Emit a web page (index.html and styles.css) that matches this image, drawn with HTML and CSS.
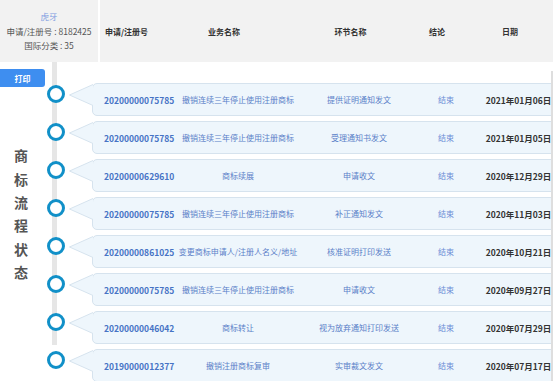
FILE: index.html
```html
<!DOCTYPE html>
<html>
    <head>
        <title>商标流程状态</title>
        <link rel="stylesheet" href="styles.css">
    </head>
<body>
    <div class="head">
        <div class="owner">
            <div class="owner-name">虎牙</div>
            <div>申请/注册号 : 8182425</div>
            <div>国际分类 : 35</div>
        </div>
        <div class="head-cols">
            <div class="hc-no">申请/注册号</div>
            <div class="hc-biz">业务名称</div>
            <div class="hc-step">环节名称</div>
            <div class="hc-res">结论</div>
            <div class="hc-date">日期</div>
        </div>
    </div>

    <div class="main">
        <div class="side">
            <button class="print-btn">打印</button>
            <div class="side-title">商标流程状态</div>
        </div>

        <div class="flow">
            <div class="row">
                <span class="node"></span>
                <svg class="tail" width="24" height="22" viewBox="0 0 24 22"><polyline points="24,0.5 0.5,11 24,21.5"></polyline></svg>
                <div class="card">
                    <div class="c-no">20200000075785</div>
                    <div class="c-biz">撤销连续三年停止使用注册商标</div>
                    <div class="c-step">提供证明通知发文</div>
                    <div class="c-res">结束</div>
                    <div class="c-date">2021年01月06日</div>
                </div>
            </div>
            <div class="row">
                <span class="node"></span>
                <svg class="tail" width="24" height="22" viewBox="0 0 24 22"><polyline points="24,0.5 0.5,11 24,21.5"></polyline></svg>
                <div class="card">
                    <div class="c-no">20200000075785</div>
                    <div class="c-biz">撤销连续三年停止使用注册商标</div>
                    <div class="c-step">受理通知书发文</div>
                    <div class="c-res">结束</div>
                    <div class="c-date">2021年01月05日</div>
                </div>
            </div>
            <div class="row">
                <span class="node"></span>
                <svg class="tail" width="24" height="22" viewBox="0 0 24 22"><polyline points="24,0.5 0.5,11 24,21.5"></polyline></svg>
                <div class="card">
                    <div class="c-no">20200000629610</div>
                    <div class="c-biz">商标续展</div>
                    <div class="c-step">申请收文</div>
                    <div class="c-res">结束</div>
                    <div class="c-date">2020年12月29日</div>
                </div>
            </div>
            <div class="row">
                <span class="node"></span>
                <svg class="tail" width="24" height="22" viewBox="0 0 24 22"><polyline points="24,0.5 0.5,11 24,21.5"></polyline></svg>
                <div class="card">
                    <div class="c-no">20200000075785</div>
                    <div class="c-biz">撤销连续三年停止使用注册商标</div>
                    <div class="c-step">补正通知发文</div>
                    <div class="c-res">结束</div>
                    <div class="c-date">2020年11月03日</div>
                </div>
            </div>
            <div class="row">
                <span class="node"></span>
                <svg class="tail" width="24" height="22" viewBox="0 0 24 22"><polyline points="24,0.5 0.5,11 24,21.5"></polyline></svg>
                <div class="card">
                    <div class="c-no">20200000861025</div>
                    <div class="c-biz">变更商标申请人/注册人名义/地址</div>
                    <div class="c-step">核准证明打印发送</div>
                    <div class="c-res">结束</div>
                    <div class="c-date">2020年10月21日</div>
                </div>
            </div>
            <div class="row">
                <span class="node"></span>
                <svg class="tail" width="24" height="22" viewBox="0 0 24 22"><polyline points="24,0.5 0.5,11 24,21.5"></polyline></svg>
                <div class="card">
                    <div class="c-no">20200000075785</div>
                    <div class="c-biz">撤销连续三年停止使用注册商标</div>
                    <div class="c-step">申请收文</div>
                    <div class="c-res">结束</div>
                    <div class="c-date">2020年09月27日</div>
                </div>
            </div>
            <div class="row">
                <span class="node"></span>
                <svg class="tail" width="24" height="22" viewBox="0 0 24 22"><polyline points="24,0.5 0.5,11 24,21.5"></polyline></svg>
                <div class="card">
                    <div class="c-no">20200000046042</div>
                    <div class="c-biz">商标转让</div>
                    <div class="c-step">视为放弃通知打印发送</div>
                    <div class="c-res">结束</div>
                    <div class="c-date">2020年07月29日</div>
                </div>
            </div>
            <div class="row">
                <span class="node"></span>
                <svg class="tail" width="24" height="22" viewBox="0 0 24 22"><polyline points="24,0.5 0.5,11 24,21.5"></polyline></svg>
                <div class="card">
                    <div class="c-no">20190000012377</div>
                    <div class="c-biz">撤销注册商标复审</div>
                    <div class="c-step">实审裁文发文</div>
                    <div class="c-res">结束</div>
                    <div class="c-date">2020年07月17日</div>
                </div>
            </div>
        </div>
    </div>
    <div class="scroll-edge"></div>
</body>
</html>
```

FILE: styles.css
```css
body {
    margin: 0;
    width: 553px;
    height: 381px;
    overflow: hidden;
    position: relative;
    background: #fff;
    font-family: "Noto Sans CJK SC", "Noto Sans", sans-serif;
    color: #333;
}

/* header */
.head {
    display: flex;
    height: 62px;
    gap: 2px;
    background: #fff;
}

.owner {
    width: 106px;
    background: #f2f2f2;
    display: flex;
    flex-direction: column;
    align-items: center;
    padding-top: 9px;
    box-sizing: border-box;
    font-size: 8.5px;
    line-height: 14.5px;
    color: #555;
}

.owner-name {
    color: #7b9ae0;
}

.head-cols {
    flex: 1;
    background: #f2f2f2;
    display: grid;
    grid-template-columns: 54px 140px 113px 60px 86px;
    align-items: center;
    font-size: 8px;
    font-weight: bold;
    color: #333;
    white-space: nowrap;
}

.head-cols div {
    text-align: center;
}

.head-cols .hc-no {
    text-align: left;
    padding-left: 5px;
}

/* body */
.main {
    display: grid;
    grid-template-columns: 46px 1fr;
}

.side {
    display: flex;
    flex-direction: column;
    align-items: flex-start;
}

.print-btn {
    margin-top: 7px;
    width: 45px;
    height: 18px;
    border: none;
    border-radius: 0 3px 3px 0;
    background: #3e8ef0;
    color: #fff;
    font-family: inherit;
    font-size: 8px;
    font-weight: bold;
    padding: 0;
}

.side-title {
    margin-top: 62px;
    width: 42px;
    writing-mode: vertical-rl;
    text-orientation: upright;
    font-size: 14px;
    font-weight: bold;
    letter-spacing: 9.3px;
    line-height: 42px;
    color: #555;
}

.flow {
    position: relative;
    padding-top: 21px;
    display: flex;
    flex-direction: column;
    gap: 5px;
}

.flow::before {
    content: "";
    position: absolute;
    left: 6px;
    top: 0;
    width: 5px;
    height: 283px;
    background: #e6e6e6;
}

.row {
    display: flex;
    align-items: flex-start;
    height: 33px;
}

.node {
    position: relative;
    margin-left: 1px;
    margin-top: 2px;
    width: 18px;
    height: 18px;
    box-sizing: border-box;
    border: 3px solid #1190c8;
    border-radius: 50%;
    background: #fff;
    flex: none;
}

.tail {
    position: relative;
    z-index: 1;
    margin-left: 4px;
    margin-right: -1px;
    margin-top: 1px;
    flex: none;
}

.tail polyline {
    fill: #eef6fc;
    stroke: #d6e3ee;
    stroke-width: 1;
}

.card {
    flex: none;
    width: 471px;
    height: 33px;
    box-sizing: border-box;
    background: #eef6fc;
    border: 1px solid #d6e3ee;
    border-radius: 5px;
    display: grid;
    grid-template-columns: 84px 122px 120px 54px 91px;
    align-items: center;
    white-space: nowrap;
}

.card div {
    text-align: center;
}

.c-no {
    text-align: left !important;
    padding-left: 11px;
    font-size: 8.5px;
    font-weight: bold;
    color: #4673c5;
}

.c-biz,
.c-step {
    font-size: 8px;
    color: #5a80c8;
}

.c-res {
    font-size: 8px;
    color: #6a8cd6;
}

.c-date {
    font-size: 8.5px;
    font-weight: bold;
    color: #333;
}

.scroll-edge {
    position: absolute;
    right: 0;
    top: 71px;
    bottom: 0;
    width: 2px;
    background: #dedede;
}
```
